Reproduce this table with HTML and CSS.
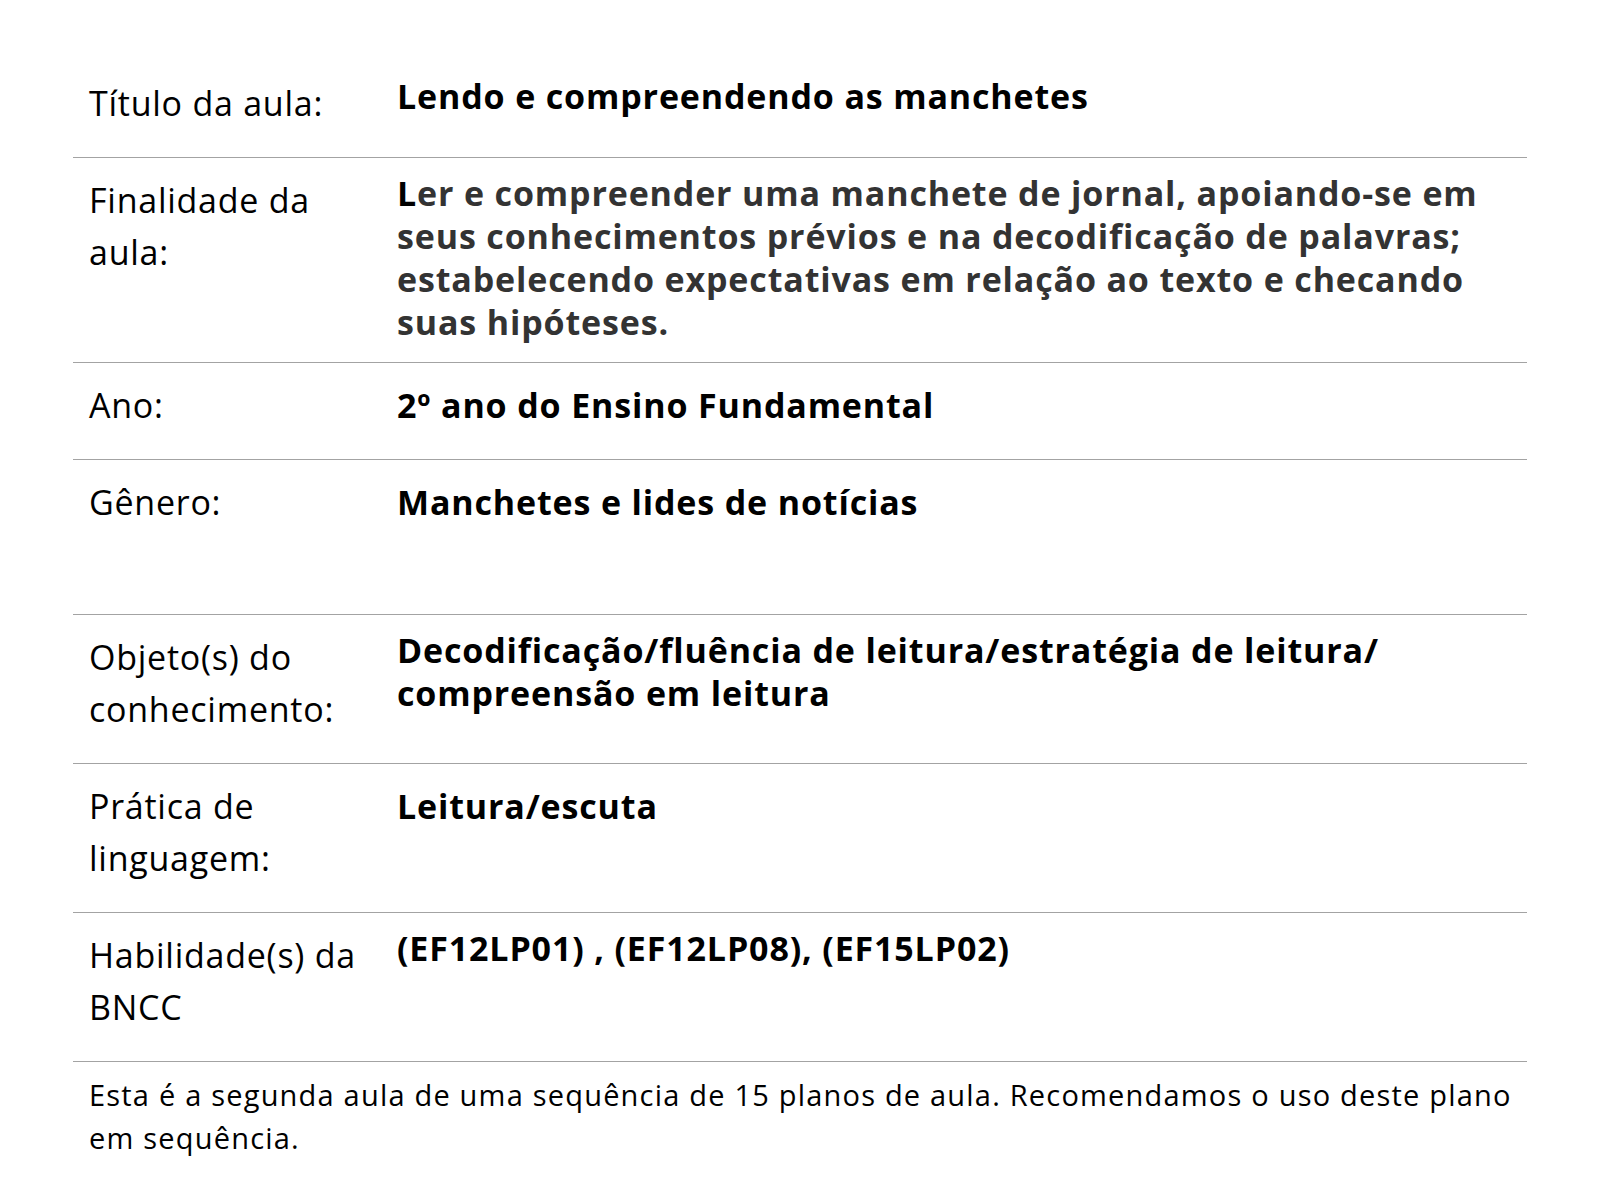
FILE: index.html
```html
<!DOCTYPE html>
<html lang="pt-BR">
<head>
<meta charset="utf-8">
<title>Plano de aula</title>
<link rel="stylesheet" href="styles.css">
</head>
<body>
<main class="sheet">
  <div class="row">
    <div class="label"><p>Título da aula:</p></div>
    <div class="value tight"><p>Lendo e compreendendo as manchetes</p></div>
  </div>
  <div class="row">
    <div class="label"><p>Finalidade da aula:</p></div>
    <div class="value tight muted"><p>Ler e compreender uma manchete de jornal, apoiando-se em seus conhecimentos prévios e na decodificação de palavras; estabelecendo expectativas em relação ao texto e checando suas hipóteses.</p></div>
  </div>
  <div class="row">
    <div class="label"><p>Ano:</p></div>
    <div class="value"><p>2º ano do Ensino Fundamental</p></div>
  </div>
  <div class="row">
    <div class="label"><p>Gênero:</p></div>
    <div class="value extra"><p>Manchetes e lides de notícias</p></div>
  </div>
  <div class="row">
    <div class="label"><p>Objeto(s) do conhecimento:</p></div>
    <div class="value tight"><p>Decodificação/fluência de leitura/estratégia de leitura/ compreensão em leitura</p></div>
  </div>
  <div class="row">
    <div class="label"><p>Prática de linguagem:</p></div>
    <div class="value"><p>Leitura/escuta</p></div>
  </div>
  <div class="row">
    <div class="label"><p>Habilidade(s) da BNCC</p></div>
    <div class="value tight"><p>(EF12LP01) , (EF12LP08), (EF15LP02)</p></div>
  </div>
  <p class="note">Esta é a segunda aula de uma sequência de 15 planos de aula. Recomendamos o uso deste plano em sequência.</p>
</main>
</body>
</html>
```

FILE: styles.css
```css
html, body {
  margin: 0;
  padding: 0;
  background: #ffffff;
}

body {
  font-family: "Open Sans", "Noto Sans", sans-serif;
  color: #000000;
}

.sheet {
  width: 1454px;
  margin-left: 73px;
  padding-top: 61px;
}

.row {
  display: grid;
  grid-template-columns: 308px 1fr;
  border-bottom: 1px solid #a3a3a3;
}

.label {
  padding: 16px 16px 18px;
  font-size: 34px;
  line-height: 52px;
  font-weight: 400;
  letter-spacing: 0.75px;
  color: #000000;
}

.label p {
  margin: 0 0 10px;
}

.value {
  padding: 16px 16px 18px;
  font-size: 34px;
  line-height: 52px;
  font-weight: 700;
  letter-spacing: 0.85px;
  color: #000000;
}

.value p {
  margin: 0;
}

.value.tight {
  padding-top: 14px;
  line-height: 43px;
}

.value.extra p {
  margin-bottom: 68px;
}

.value.muted {
  color: #333333;
}

.value.muted p::first-letter {
  color: #000000;
}

.note {
  margin: 0;
  padding: 11px 0 0 16px;
  font-size: 29px;
  line-height: 43px;
  letter-spacing: 1.2px;
  color: #000000;
}
```
